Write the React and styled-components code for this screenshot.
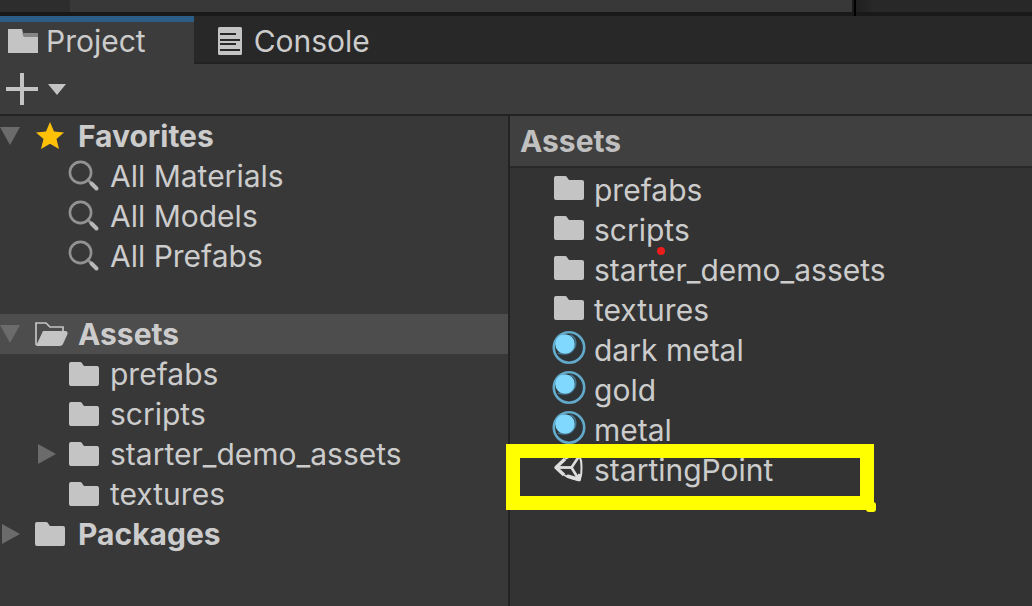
import React from "react";
import styled, { createGlobalStyle } from "styled-components";

const GlobalStyle = createGlobalStyle`
  * { box-sizing: border-box; }
  body { margin: 0; background: #383838; }
  button { font: inherit; color: inherit; background: none; border: 0; margin: 0; padding: 0; text-align: left; }
`;

const Window = styled.div`
  min-height: 100vh;
  display: flex;
  flex-direction: column;
  overflow: hidden;
  background: #383838;
  color: #cccccc;
  font-family: Inter, "Liberation Sans", sans-serif;
  font-size: 30px;
  line-height: 40px;
`;

const UpperEdge = styled.div`
  display: grid;
  grid-template-columns: 70fr 782fr 180fr;
  height: 16px;
  border-bottom: 4px solid #191919;
`;

const EdgePane = styled.div`
  background: ${(p) => p.$bg};
`;

const EdgeViewport = styled.div`
  margin-bottom: -4px;
  border-left: 2px solid #191919;
  background: linear-gradient(#191919, #191919) bottom / 100% 4px no-repeat,
    linear-gradient(90deg, #1f1f1f, #282828 20px);
  &::before {
    content: "";
    display: block;
    width: 2px;
    height: 100%;
    background: #000;
  }
`;

const TabBar = styled.div`
  display: flex;
  height: 48px;
  background: #282828;
`;

const Tab = styled.button`
  display: flex;
  align-items: center;
  gap: 8px;
  padding: 4px 46px 0 8px;
  border-bottom: 2px solid #232323;
  &[aria-selected="true"] {
    background: #3c3c3c;
    border-top: 6px solid #2c5d87;
    border-bottom: 0;
    padding-top: 0;
    padding-bottom: 4px;
    padding-right: 48px;
  }
  &:not([aria-selected="true"]) {
    flex: 1;
    gap: 12px;
    padding-left: 24px;
  }
`;

const Toolbar = styled.div`
  display: flex;
  align-items: center;
  height: 52px;
  padding-left: 6px;
  background: #3c3c3c;
  border-bottom: 2px solid #232323;
`;

const CreateButton = styled.button`
  display: flex;
  align-items: center;
  gap: 10px;
`;

const Panels = styled.main`
  flex: 1;
  display: grid;
  grid-template-columns: 510fr 522fr;
`;

const TreePanel = styled.nav`
  min-width: 0;
  border-right: 2px solid #232323;
`;

const Branch = styled.section`
  margin-top: ${(p) => (p.$spaced ? "38px" : "0")};
`;

const TreeRow = styled.button`
  display: flex;
  align-items: center;
  width: 100%;
  height: 40px;
  padding-left: ${(p) => (p.$child ? "36px" : "0")};
  background: ${(p) => (p.$selected ? "#4d4d4d" : "transparent")};
  font-weight: ${(p) => (p.$child ? 400 : 700)};
  white-space: nowrap;
`;

const Arrow = styled.span`
  display: flex;
  flex: none;
  width: ${(p) => (p.$child ? "32px" : "34px")};
`;

const TreeIcon = styled.span`
  display: flex;
  align-items: center;
  flex: none;
  width: ${(p) => (p.$child ? "42px" : "44px")};
`;

const ContentPanel = styled.section`
  min-width: 0;
  background: #333333;
`;

const PathHeader = styled.h2`
  margin: 0 0 2px;
  height: 52px;
  padding-left: 10px;
  background: #404040;
  border-bottom: 2px solid #282828;
  color: #c0c0c0;
  font-size: 30px;
  font-weight: 700;
  line-height: 50px;
`;

const AssetList = styled.ul`
  list-style: none;
  margin: 0;
  padding: 0;
`;

const AssetItem = styled.li`
  position: relative;
`;

const AssetButton = styled.button`
  display: flex;
  align-items: center;
  width: 100%;
  height: 40px;
  padding-left: 42px;
  white-space: nowrap;
`;

const AssetIcon = styled.span`
  display: flex;
  justify-content: center;
  flex: none;
  width: 34px;
  margin-right: 8px;
  padding-bottom: 4px;
`;

const Highlight = styled.span`
  position: absolute;
  top: -6px;
  left: -4px;
  width: 368px;
  height: 66px;
  border: 14px solid #ffff00;
  pointer-events: none;
  &::after {
    content: "";
    position: absolute;
    right: -16px;
    bottom: -16px;
    width: 10px;
    height: 10px;
    border-radius: 3px;
    background: #ffff00;
  }
`;

const RedDot = styled.span`
  position: absolute;
  top: 37px;
  left: 147px;
  width: 8px;
  height: 8px;
  border-radius: 50%;
  background: #ea1c1c;
`;

const FolderIcon = () => (
  <svg width="32" height="26" viewBox="0 0 32 26" aria-hidden="true">
    <path fill="#c4c4c4" d="M1 3Q1 1 3 1H12Q14 1 14.5 3L16 5H29Q31 5 31 7V23Q31 25 29 25H3Q1 25 1 23Z" />
  </svg>
);

const TabFolderIcon = () => (
  <svg width="30" height="24" viewBox="0 0 30 24" aria-hidden="true">
    <path fill="#c4c4c4" d="M0 0H14L16 8H30V24H0Z" />
    <path fill="#858585" d="M14 4H30V8H16Z" />
  </svg>
);

const OpenFolderIcon = () => (
  <svg width="34" height="26" viewBox="0 0 34 26" aria-hidden="true">
    <path fill="none" stroke="#c4c4c4" strokeWidth="1.7" d="M2 24V2H12L16 6H29V10" />
    <path fill="#c4c4c4" d="M9 10H31Q34 10 33.5 13L29 23Q28 25 26 25H2Z" />
  </svg>
);

const ConsoleIcon = () => (
  <svg width="24" height="28" viewBox="0 0 24 28" aria-hidden="true">
    <rect width="24" height="28" rx="1.5" fill="#c4c4c4" />
    <path stroke="#282828" strokeWidth="2" d="M2 7H18M2 13H22M2 17H18M2 23H22" />
  </svg>
);

const SearchIcon = () => (
  <svg width="32" height="32" viewBox="0 0 32 32" aria-hidden="true">
    <circle cx="12.500" cy="12.500" r="10.600" fill="none" stroke="#929292" strokeWidth="2.600" />
    <path stroke="#929292" strokeWidth="2.500" d="M19 19L24 24" />
    <path stroke="#b8b8b8" strokeWidth="4" strokeLinecap="round" d="M23.500 23.500L28.500 28.500" />
  </svg>
);

const StarIcon = () => (
  <svg width="32" height="28" viewBox="0 0 32 28" aria-hidden="true">
    <path fill="#ffc107" d="M16 0L20 9.500L30 10.500L22.500 17L25 27L16 21.700L7 27L9.500 17L2 10.500L12 9.500Z" />
  </svg>
);

const MaterialIcon = () => (
  <svg width="34" height="34" viewBox="0 0 34 34" aria-hidden="true">
    <circle cx="17" cy="16.500" r="15.200" fill="#2f3335" stroke="#62a9ca" strokeWidth="2.600" />
    <path fill="none" stroke="#45788e" strokeWidth="1.500" d="M18 4Q25 6 23.500 15Q19 26 6 22" />
    <circle cx="13" cy="13" r="9.800" fill="#80d8ff" />
  </svg>
);

const SceneIcon = () => (
  <svg width="32" height="30" viewBox="0 0 32 30" aria-hidden="true">
    <g fill="none" stroke="#dedede" strokeLinejoin="round">
      <path strokeWidth="3.400" d="M12 6L3 14.500L11 22" />
      <path strokeWidth="2.800" d="M3 14.500H18.500" />
      <path strokeWidth="2" d="M12 6Q18 2 26 2Q29 8 28.500 14Q29 21 26.500 27Q18 26 11 22" />
      <path strokeWidth="2.600" d="M25.500 4L18.500 14.500L25.500 26" />
      <path strokeWidth="3.800" d="M14 23L26 26.500L27 21" />
    </g>
  </svg>
);

const DownTriangle = () => (
  <svg width="20" height="18" viewBox="0 0 20 18" aria-hidden="true">
    <path fill="#6b6b6b" d="M0 0H20L10 18Z" />
  </svg>
);

const RightTriangle = () => (
  <svg width="20" height="20" viewBox="0 0 20 20" aria-hidden="true">
    <path fill="#6b6b6b" d="M2 0L20 10L2 20Z" />
  </svg>
);

const assets = [
  ["prefabs", FolderIcon],
  ["scripts", FolderIcon],
  ["starter_demo_assets", FolderIcon],
  ["textures", FolderIcon],
  ["dark metal", MaterialIcon],
  ["gold", MaterialIcon],
  ["metal", MaterialIcon],
  ["startingPoint", SceneIcon],
];

function TreeNode({ label, icon: Icon, arrow: ArrowIcon, child, selected }) {
  return (
    <TreeRow type="button" $child={child} $selected={selected}>
      <Arrow $child={child}>{ArrowIcon && <ArrowIcon />}</Arrow>
      <TreeIcon $child={child}><Icon /></TreeIcon>
      {label}
    </TreeRow>
  );
}

export default function App() {
  return (
    <Window>
      <GlobalStyle />
      <UpperEdge>
        <EdgePane $bg="#2d2d2d" />
        <EdgePane $bg="#383838" />
        <EdgeViewport />
      </UpperEdge>
      <TabBar role="tablist">
        <Tab type="button" role="tab" aria-selected="true"><TabFolderIcon />Project</Tab>
        <Tab type="button" role="tab" aria-selected="false"><ConsoleIcon />Console</Tab>
      </TabBar>
      <Toolbar>
        <CreateButton type="button" aria-label="Create">
          <svg width="32" height="32" viewBox="0 0 32 32" aria-hidden="true">
            <path stroke="#c4c4c4" strokeWidth="4" d="M16 0V32M0 16H32" />
          </svg>
          <svg width="18" height="11" viewBox="0 0 18 11" aria-hidden="true">
            <path fill="#c4c4c4" d="M0 0H18L9 11Z" />
          </svg>
        </CreateButton>
      </Toolbar>
      <Panels>
        <TreePanel>
          <Branch>
            <TreeNode label="Favorites" icon={StarIcon} arrow={DownTriangle} />
            <TreeNode label="All Materials" icon={SearchIcon} child />
            <TreeNode label="All Models" icon={SearchIcon} child />
            <TreeNode label="All Prefabs" icon={SearchIcon} child />
          </Branch>
          <Branch $spaced>
            <TreeNode label="Assets" icon={OpenFolderIcon} arrow={DownTriangle} selected />
            <TreeNode label="prefabs" icon={FolderIcon} child />
            <TreeNode label="scripts" icon={FolderIcon} child />
            <TreeNode label="starter_demo_assets" icon={FolderIcon} arrow={RightTriangle} child />
            <TreeNode label="textures" icon={FolderIcon} child />
          </Branch>
          <Branch>
            <TreeNode label="Packages" icon={FolderIcon} arrow={RightTriangle} />
          </Branch>
        </TreePanel>
        <ContentPanel>
          <PathHeader>Assets</PathHeader>
          <AssetList>
            {assets.map(([name, Icon]) => (
              <AssetItem key={name}>
                <AssetButton type="button">
                  <AssetIcon><Icon /></AssetIcon>
                  {name}
                </AssetButton>
                {name === "scripts" && <RedDot />}
                {name === "startingPoint" && <Highlight />}
              </AssetItem>
            ))}
          </AssetList>
        </ContentPanel>
      </Panels>
    </Window>
  );
}
